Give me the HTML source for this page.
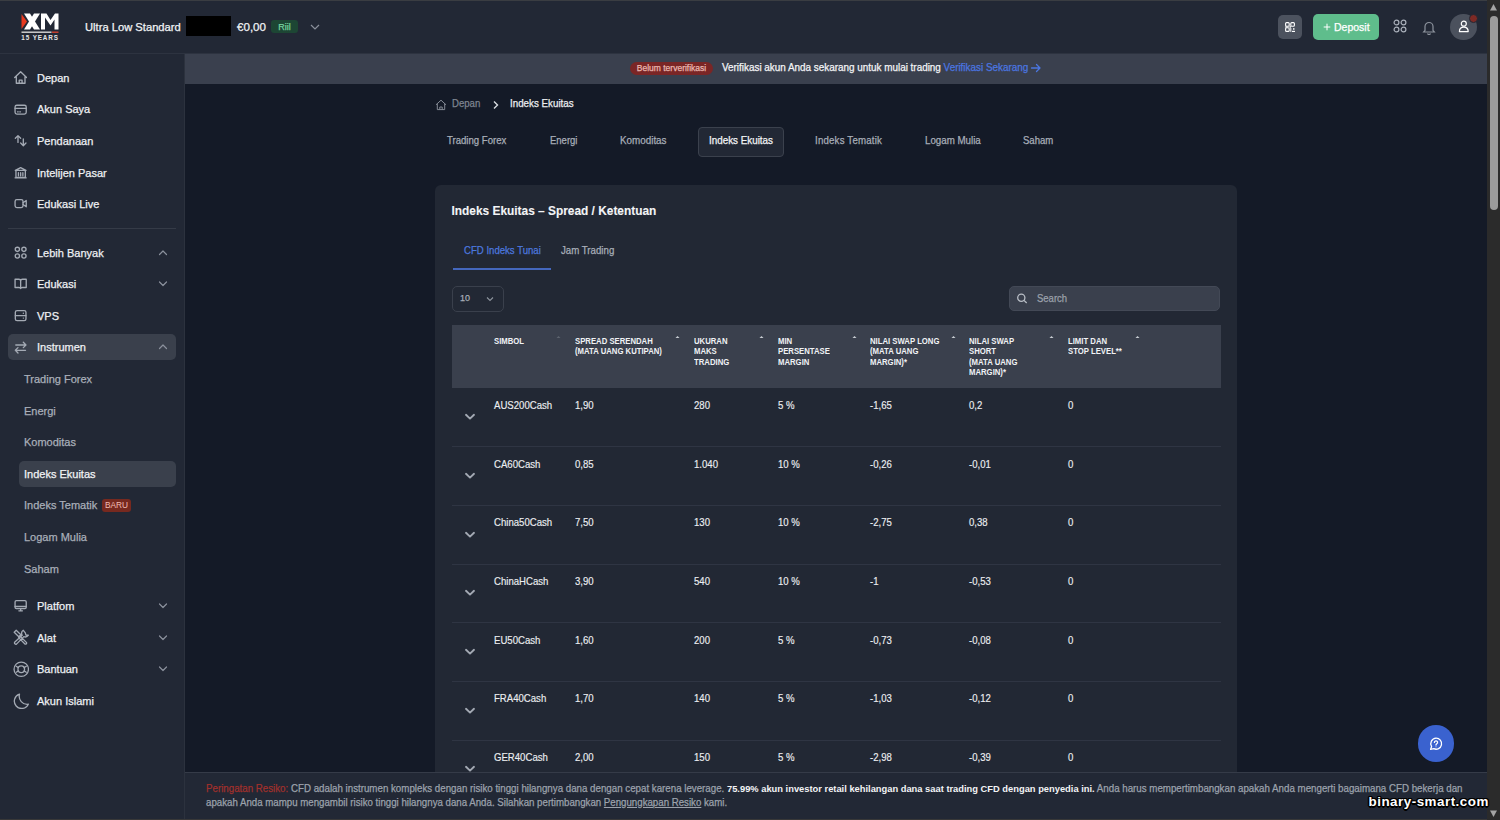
<!DOCTYPE html>
<html><head><meta charset="utf-8">
<style>
*{box-sizing:border-box;margin:0;padding:0}
html,body{width:1500px;height:820px;overflow:hidden}
body{background:#141a27;font-family:"Liberation Sans",sans-serif;color:#e6e8ec;position:relative}
div,span,b,u{-webkit-text-stroke:0.25px currentColor}
.abs{position:absolute}
#topline{left:0;top:0;width:1500px;height:1px;background:#3a3d42}
#header{left:0;top:1px;width:1487px;height:52px;background:#222835}
#hdrline{left:0;top:53px;width:1487px;height:1px;background:#2d3340}
#sidebar{left:0;top:54px;width:184px;height:766px;background:#222835}
#sbline{left:184px;top:54px;width:1px;height:766px;background:#2c323e}
#banner{left:185px;top:54px;width:1302px;height:30px;background:#3a404e}
#footer{left:185px;top:772px;width:1302px;height:48px;background:#222835;border-top:1px solid #353b48}
#scroll{left:1487px;top:0;width:13px;height:820px;background:#2b2b2b}
#thumb{left:1490px;top:16px;width:8px;height:194px;border-radius:4px;background:#9b9b9b}
.nav{position:absolute;left:37px;font-size:11px;color:#eef0f3;white-space:nowrap}
.sub{position:absolute;left:24px;font-size:11px;color:#a9afb9;white-space:nowrap}
.ico{position:absolute;left:14px;width:14px;height:14px}
.chev{position:absolute;left:158px;width:10px;height:10px}
</style></head><body>
<div id="topline" class="abs"></div>
<div id="header" class="abs"></div>
<div id="hdrline" class="abs"></div>
<div id="sidebar" class="abs"></div>
<div id="sbline" class="abs"></div>
<div id="banner" class="abs"></div>
<!-- banner content -->
<div class="abs" style="left:630px;top:62px;width:83px;height:12.5px;border-radius:7px;background:#7a2626;color:#eab8b1;font-size:8.5px;line-height:12.5px;text-align:center;white-space:nowrap">Belum terverifikasi</div>
<div class="abs" style="left:721.5px;top:61px;font-size:10.49px;line-height:14px;color:#f3f4f6;white-space:nowrap;transform:scaleX(0.9434);transform-origin:0 0">Verifikasi akun Anda sekarang untuk mulai trading <span style="color:#4b76e0">Verifikasi Sekarang</span></div>
<svg class="abs" style="left:1030px;top:63px" width="12" height="10" viewBox="0 0 12 10" fill="none" stroke="#4b76e0" stroke-width="1.3" stroke-linecap="round" stroke-linejoin="round"><path d="M1.5 5 H10 M6.5 1.5 L10 5 L6.5 8.5"/></svg>
<!-- breadcrumb -->
<svg class="abs" style="left:435px;top:99px" width="12" height="12" viewBox="0 0 12 12" fill="none" stroke="#858b96" stroke-width="1" stroke-linejoin="round"><path d="M1 5.8 L6 1.2 L11 5.8 M2.3 4.8 V10.6 H9.7 V4.8 M4.8 10.6 V8 H7.2 V10.6"/></svg>
<div class="abs" style="left:452px;top:97px;font-size:10.18px;line-height:14px;color:#7e8490;white-space:nowrap;transform:scaleX(0.9434);transform-origin:0 0">Depan</div>
<svg class="abs" style="left:492px;top:100px" width="8" height="10" viewBox="0 0 8 10"><path d="M2 1.5 L5.5 5 L2 8.5" fill="none" stroke="#d9dce1" stroke-width="1.4"/></svg>
<div class="abs" style="left:510px;top:97px;font-size:10.39px;line-height:14px;color:#eceef1;white-space:nowrap;transform:scaleX(0.9434);transform-origin:0 0">Indeks Ekuitas</div>
<!-- tabs -->
<div class="abs" style="left:698px;top:127px;width:86px;height:30px;border-radius:4px;background:#222835;border:1px solid #3b414d"></div>
<div class="abs" style="left:447.2px;top:133.7px;font-size:10.18px;line-height:14px;color:#a8aeb8;white-space:nowrap;transform:scaleX(0.9434);transform-origin:0 0">Trading Forex</div>
<div class="abs" style="left:549.6px;top:133.7px;font-size:10.07px;line-height:14px;color:#a8aeb8;white-space:nowrap;transform:scaleX(0.9434);transform-origin:0 0">Energi</div>
<div class="abs" style="left:619.5px;top:133.7px;font-size:10.45px;line-height:14px;color:#a8aeb8;white-space:nowrap;transform:scaleX(0.9434);transform-origin:0 0">Komoditas</div>
<div class="abs" style="left:708.8px;top:133.7px;font-size:10.43px;line-height:14px;color:#f3f4f6;white-space:nowrap;transform:scaleX(0.9434);transform-origin:0 0">Indeks Ekuitas</div>
<div class="abs" style="left:815.3px;top:133.7px;font-size:10.28px;letter-spacing:0.2px;line-height:14px;color:#a8aeb8;white-space:nowrap;transform:scaleX(0.9434);transform-origin:0 0">Indeks Tematik</div>
<div class="abs" style="left:924.5px;top:133.7px;font-size:10.34px;line-height:14px;color:#a8aeb8;white-space:nowrap;transform:scaleX(0.9434);transform-origin:0 0">Logam Mulia</div>
<div class="abs" style="left:1022.5px;top:133.7px;font-size:10.13px;line-height:14px;color:#a8aeb8;white-space:nowrap;transform:scaleX(0.9434);transform-origin:0 0">Saham</div>
<!-- card -->
<div class="abs" style="left:435px;top:185px;width:802px;height:600px;border-radius:6px;background:#222834"></div>
<div class="abs" style="left:451.5px;top:203px;font-size:11.9px;font-weight:bold;line-height:16px;color:#f3f4f6;white-space:nowrap;-webkit-text-stroke:0.1px">Indeks Ekuitas &#8211; Spread / Ketentuan</div>
<div class="abs" style="left:463.5px;top:244px;font-size:10.18px;line-height:14px;color:#4c77de;white-space:nowrap;transform:scaleX(0.9434);transform-origin:0 0">CFD Indeks Tunai</div>
<div class="abs" style="left:561.4px;top:244px;font-size:10.28px;line-height:14px;color:#a8aeb8;white-space:nowrap;transform:scaleX(0.9434);transform-origin:0 0">Jam Trading</div>
<div class="abs" style="left:452.5px;top:267.5px;width:98px;height:2px;background:#4467bd"></div>
<div class="abs" style="left:451.5px;top:286px;width:52px;height:25.5px;border-radius:5px;border:1px solid #3a404c"></div>
<div class="abs" style="left:459.5px;top:291.3px;font-size:9.9px;line-height:14px;color:#a8aeb8;transform:scaleX(0.91);transform-origin:0 0">10</div>
<svg class="abs" style="left:486px;top:296px" width="8" height="6" viewBox="0 0 8 6"><path d="M1 1.5 L4 4.5 L7 1.5" fill="none" stroke="#8e949e" stroke-width="1.1"/></svg>
<div class="abs" style="left:1009.3px;top:286.3px;width:211px;height:25px;border-radius:5px;background:#3a404d;border:1px solid #434956"></div>
<svg class="abs" style="left:1016px;top:292px" width="12" height="12" viewBox="0 0 12 12" fill="none" stroke="#b9bec6" stroke-width="1.3"><circle cx="5.3" cy="5.7" r="3.6"/><path d="M8 8.4 L10.7 11"/></svg>
<div class="abs" style="left:1036.5px;top:291.5px;font-size:10.07px;line-height:14px;color:#9aa0aa;white-space:nowrap;transform:scaleX(0.9434);transform-origin:0 0">Search</div>
<!-- table header -->
<div class="abs" style="left:451.5px;top:325px;width:769px;height:63px;background:#3a404d"></div>
<div class="abs" style="left:493.5px;top:335.9px;font-size:9.4px;font-weight:bold;line-height:10.4px;color:#f0f2f5;white-space:nowrap;transform:scaleX(0.825);transform-origin:0 0;-webkit-text-stroke:0">SIMBOL</div>
<svg class="abs" style="left:556.2px;top:334.8px" width="5" height="4" viewBox="0 0 5 4"><path d="M0.5 3 L2.5 1 L4.5 3 Z" fill="#5d636e"/></svg>
<div class="abs" style="left:574.8px;top:335.9px;font-size:9.4px;font-weight:bold;line-height:10.4px;color:#f0f2f5;white-space:nowrap;transform:scaleX(0.825);transform-origin:0 0;-webkit-text-stroke:0">SPREAD SERENDAH<br>(MATA UANG KUTIPAN)</div>
<svg class="abs" style="left:674.7px;top:334.8px" width="5" height="4" viewBox="0 0 5 4"><path d="M0.5 3 L2.5 1 L4.5 3 Z" fill="#c9cdd3"/></svg>
<div class="abs" style="left:693.5px;top:335.9px;font-size:9.4px;font-weight:bold;line-height:10.4px;color:#f0f2f5;white-space:nowrap;transform:scaleX(0.825);transform-origin:0 0;-webkit-text-stroke:0">UKURAN<br>MAKS<br>TRADING</div>
<svg class="abs" style="left:759.4px;top:334.8px" width="5" height="4" viewBox="0 0 5 4"><path d="M0.5 3 L2.5 1 L4.5 3 Z" fill="#c9cdd3"/></svg>
<div class="abs" style="left:777.7px;top:335.9px;font-size:9.4px;font-weight:bold;line-height:10.4px;color:#f0f2f5;white-space:nowrap;transform:scaleX(0.825);transform-origin:0 0;-webkit-text-stroke:0">MIN<br>PERSENTASE<br>MARGIN</div>
<svg class="abs" style="left:851.5px;top:334.8px" width="5" height="4" viewBox="0 0 5 4"><path d="M0.5 3 L2.5 1 L4.5 3 Z" fill="#c9cdd3"/></svg>
<div class="abs" style="left:870.2px;top:335.9px;font-size:9.4px;font-weight:bold;line-height:10.4px;color:#f0f2f5;white-space:nowrap;transform:scaleX(0.825);transform-origin:0 0;-webkit-text-stroke:0">NILAI SWAP LONG<br>(MATA UANG<br>MARGIN)*</div>
<svg class="abs" style="left:950.5px;top:334.8px" width="5" height="4" viewBox="0 0 5 4"><path d="M0.5 3 L2.5 1 L4.5 3 Z" fill="#c9cdd3"/></svg>
<div class="abs" style="left:968.8px;top:335.9px;font-size:9.4px;font-weight:bold;line-height:10.4px;color:#f0f2f5;white-space:nowrap;transform:scaleX(0.825);transform-origin:0 0;-webkit-text-stroke:0">NILAI SWAP<br>SHORT<br>(MATA UANG<br>MARGIN)*</div>
<svg class="abs" style="left:1049.4px;top:334.8px" width="5" height="4" viewBox="0 0 5 4"><path d="M0.5 3 L2.5 1 L4.5 3 Z" fill="#c9cdd3"/></svg>
<div class="abs" style="left:1067.7px;top:335.9px;font-size:9.4px;font-weight:bold;line-height:10.4px;color:#f0f2f5;white-space:nowrap;transform:scaleX(0.825);transform-origin:0 0;-webkit-text-stroke:0">LIMIT DAN<br>STOP LEVEL**</div>
<svg class="abs" style="left:1134.9px;top:334.8px" width="5" height="4" viewBox="0 0 5 4"><path d="M0.5 3 L2.5 1 L4.5 3 Z" fill="#c9cdd3"/></svg>
<div class="abs" style="left:493.5px;top:399.0px;font-size:10.4px;line-height:14px;color:#eceef1;white-space:nowrap;transform:scaleX(0.923);transform-origin:0 0;-webkit-text-stroke:0.15px currentColor">AUS200Cash</div>
<div class="abs" style="left:574.8px;top:399.0px;font-size:10.4px;line-height:14px;color:#eceef1;white-space:nowrap;transform:scaleX(0.923);transform-origin:0 0;-webkit-text-stroke:0.15px currentColor">1,90</div>
<div class="abs" style="left:693.5px;top:399.0px;font-size:10.4px;line-height:14px;color:#eceef1;white-space:nowrap;transform:scaleX(0.923);transform-origin:0 0;-webkit-text-stroke:0.15px currentColor">280</div>
<div class="abs" style="left:777.7px;top:399.0px;font-size:10.4px;line-height:14px;color:#eceef1;white-space:nowrap;transform:scaleX(0.923);transform-origin:0 0;-webkit-text-stroke:0.15px currentColor">5 %</div>
<div class="abs" style="left:870.4px;top:399.0px;font-size:10.4px;line-height:14px;color:#eceef1;white-space:nowrap;transform:scaleX(0.923);transform-origin:0 0;-webkit-text-stroke:0.15px currentColor">-1,65</div>
<div class="abs" style="left:968.8px;top:399.0px;font-size:10.4px;line-height:14px;color:#eceef1;white-space:nowrap;transform:scaleX(0.923);transform-origin:0 0;-webkit-text-stroke:0.15px currentColor">0,2</div>
<div class="abs" style="left:1067.7px;top:399.0px;font-size:10.4px;line-height:14px;color:#eceef1;white-space:nowrap;transform:scaleX(0.923);transform-origin:0 0;-webkit-text-stroke:0.15px currentColor">0</div>
<svg class="abs" style="left:464px;top:413.2px" width="12" height="8" viewBox="0 0 12 8"><path d="M2 1.8 L6 5.6 L10 1.8" fill="none" stroke="#a3a9b3" stroke-width="1.9" stroke-linecap="round" stroke-linejoin="round"/></svg>
<div class="abs" style="left:451.5px;top:446.2px;width:769px;height:1px;background:#2f3543"></div>
<div class="abs" style="left:493.5px;top:457.6px;font-size:10.4px;line-height:14px;color:#eceef1;white-space:nowrap;transform:scaleX(0.923);transform-origin:0 0;-webkit-text-stroke:0.15px currentColor">CA60Cash</div>
<div class="abs" style="left:574.8px;top:457.6px;font-size:10.4px;line-height:14px;color:#eceef1;white-space:nowrap;transform:scaleX(0.923);transform-origin:0 0;-webkit-text-stroke:0.15px currentColor">0,85</div>
<div class="abs" style="left:693.5px;top:457.6px;font-size:10.4px;line-height:14px;color:#eceef1;white-space:nowrap;transform:scaleX(0.923);transform-origin:0 0;-webkit-text-stroke:0.15px currentColor">1.040</div>
<div class="abs" style="left:777.7px;top:457.6px;font-size:10.4px;line-height:14px;color:#eceef1;white-space:nowrap;transform:scaleX(0.923);transform-origin:0 0;-webkit-text-stroke:0.15px currentColor">10 %</div>
<div class="abs" style="left:870.4px;top:457.6px;font-size:10.4px;line-height:14px;color:#eceef1;white-space:nowrap;transform:scaleX(0.923);transform-origin:0 0;-webkit-text-stroke:0.15px currentColor">-0,26</div>
<div class="abs" style="left:968.8px;top:457.6px;font-size:10.4px;line-height:14px;color:#eceef1;white-space:nowrap;transform:scaleX(0.923);transform-origin:0 0;-webkit-text-stroke:0.15px currentColor">-0,01</div>
<div class="abs" style="left:1067.7px;top:457.6px;font-size:10.4px;line-height:14px;color:#eceef1;white-space:nowrap;transform:scaleX(0.923);transform-origin:0 0;-webkit-text-stroke:0.15px currentColor">0</div>
<svg class="abs" style="left:464px;top:471.8px" width="12" height="8" viewBox="0 0 12 8"><path d="M2 1.8 L6 5.6 L10 1.8" fill="none" stroke="#a3a9b3" stroke-width="1.9" stroke-linecap="round" stroke-linejoin="round"/></svg>
<div class="abs" style="left:451.5px;top:504.8px;width:769px;height:1px;background:#2f3543"></div>
<div class="abs" style="left:493.5px;top:516.3px;font-size:10.4px;line-height:14px;color:#eceef1;white-space:nowrap;transform:scaleX(0.923);transform-origin:0 0;-webkit-text-stroke:0.15px currentColor">China50Cash</div>
<div class="abs" style="left:574.8px;top:516.3px;font-size:10.4px;line-height:14px;color:#eceef1;white-space:nowrap;transform:scaleX(0.923);transform-origin:0 0;-webkit-text-stroke:0.15px currentColor">7,50</div>
<div class="abs" style="left:693.5px;top:516.3px;font-size:10.4px;line-height:14px;color:#eceef1;white-space:nowrap;transform:scaleX(0.923);transform-origin:0 0;-webkit-text-stroke:0.15px currentColor">130</div>
<div class="abs" style="left:777.7px;top:516.3px;font-size:10.4px;line-height:14px;color:#eceef1;white-space:nowrap;transform:scaleX(0.923);transform-origin:0 0;-webkit-text-stroke:0.15px currentColor">10 %</div>
<div class="abs" style="left:870.4px;top:516.3px;font-size:10.4px;line-height:14px;color:#eceef1;white-space:nowrap;transform:scaleX(0.923);transform-origin:0 0;-webkit-text-stroke:0.15px currentColor">-2,75</div>
<div class="abs" style="left:968.8px;top:516.3px;font-size:10.4px;line-height:14px;color:#eceef1;white-space:nowrap;transform:scaleX(0.923);transform-origin:0 0;-webkit-text-stroke:0.15px currentColor">0,38</div>
<div class="abs" style="left:1067.7px;top:516.3px;font-size:10.4px;line-height:14px;color:#eceef1;white-space:nowrap;transform:scaleX(0.923);transform-origin:0 0;-webkit-text-stroke:0.15px currentColor">0</div>
<svg class="abs" style="left:464px;top:530.5px" width="12" height="8" viewBox="0 0 12 8"><path d="M2 1.8 L6 5.6 L10 1.8" fill="none" stroke="#a3a9b3" stroke-width="1.9" stroke-linecap="round" stroke-linejoin="round"/></svg>
<div class="abs" style="left:451.5px;top:563.5px;width:769px;height:1px;background:#2f3543"></div>
<div class="abs" style="left:493.5px;top:574.9px;font-size:10.4px;line-height:14px;color:#eceef1;white-space:nowrap;transform:scaleX(0.923);transform-origin:0 0;-webkit-text-stroke:0.15px currentColor">ChinaHCash</div>
<div class="abs" style="left:574.8px;top:574.9px;font-size:10.4px;line-height:14px;color:#eceef1;white-space:nowrap;transform:scaleX(0.923);transform-origin:0 0;-webkit-text-stroke:0.15px currentColor">3,90</div>
<div class="abs" style="left:693.5px;top:574.9px;font-size:10.4px;line-height:14px;color:#eceef1;white-space:nowrap;transform:scaleX(0.923);transform-origin:0 0;-webkit-text-stroke:0.15px currentColor">540</div>
<div class="abs" style="left:777.7px;top:574.9px;font-size:10.4px;line-height:14px;color:#eceef1;white-space:nowrap;transform:scaleX(0.923);transform-origin:0 0;-webkit-text-stroke:0.15px currentColor">10 %</div>
<div class="abs" style="left:870.4px;top:574.9px;font-size:10.4px;line-height:14px;color:#eceef1;white-space:nowrap;transform:scaleX(0.923);transform-origin:0 0;-webkit-text-stroke:0.15px currentColor">-1</div>
<div class="abs" style="left:968.8px;top:574.9px;font-size:10.4px;line-height:14px;color:#eceef1;white-space:nowrap;transform:scaleX(0.923);transform-origin:0 0;-webkit-text-stroke:0.15px currentColor">-0,53</div>
<div class="abs" style="left:1067.7px;top:574.9px;font-size:10.4px;line-height:14px;color:#eceef1;white-space:nowrap;transform:scaleX(0.923);transform-origin:0 0;-webkit-text-stroke:0.15px currentColor">0</div>
<svg class="abs" style="left:464px;top:589.1px" width="12" height="8" viewBox="0 0 12 8"><path d="M2 1.8 L6 5.6 L10 1.8" fill="none" stroke="#a3a9b3" stroke-width="1.9" stroke-linecap="round" stroke-linejoin="round"/></svg>
<div class="abs" style="left:451.5px;top:622.1px;width:769px;height:1px;background:#2f3543"></div>
<div class="abs" style="left:493.5px;top:633.6px;font-size:10.4px;line-height:14px;color:#eceef1;white-space:nowrap;transform:scaleX(0.923);transform-origin:0 0;-webkit-text-stroke:0.15px currentColor">EU50Cash</div>
<div class="abs" style="left:574.8px;top:633.6px;font-size:10.4px;line-height:14px;color:#eceef1;white-space:nowrap;transform:scaleX(0.923);transform-origin:0 0;-webkit-text-stroke:0.15px currentColor">1,60</div>
<div class="abs" style="left:693.5px;top:633.6px;font-size:10.4px;line-height:14px;color:#eceef1;white-space:nowrap;transform:scaleX(0.923);transform-origin:0 0;-webkit-text-stroke:0.15px currentColor">200</div>
<div class="abs" style="left:777.7px;top:633.6px;font-size:10.4px;line-height:14px;color:#eceef1;white-space:nowrap;transform:scaleX(0.923);transform-origin:0 0;-webkit-text-stroke:0.15px currentColor">5 %</div>
<div class="abs" style="left:870.4px;top:633.6px;font-size:10.4px;line-height:14px;color:#eceef1;white-space:nowrap;transform:scaleX(0.923);transform-origin:0 0;-webkit-text-stroke:0.15px currentColor">-0,73</div>
<div class="abs" style="left:968.8px;top:633.6px;font-size:10.4px;line-height:14px;color:#eceef1;white-space:nowrap;transform:scaleX(0.923);transform-origin:0 0;-webkit-text-stroke:0.15px currentColor">-0,08</div>
<div class="abs" style="left:1067.7px;top:633.6px;font-size:10.4px;line-height:14px;color:#eceef1;white-space:nowrap;transform:scaleX(0.923);transform-origin:0 0;-webkit-text-stroke:0.15px currentColor">0</div>
<svg class="abs" style="left:464px;top:647.8px" width="12" height="8" viewBox="0 0 12 8"><path d="M2 1.8 L6 5.6 L10 1.8" fill="none" stroke="#a3a9b3" stroke-width="1.9" stroke-linecap="round" stroke-linejoin="round"/></svg>
<div class="abs" style="left:451.5px;top:680.8px;width:769px;height:1px;background:#2f3543"></div>
<div class="abs" style="left:493.5px;top:692.3px;font-size:10.4px;line-height:14px;color:#eceef1;white-space:nowrap;transform:scaleX(0.923);transform-origin:0 0;-webkit-text-stroke:0.15px currentColor">FRA40Cash</div>
<div class="abs" style="left:574.8px;top:692.3px;font-size:10.4px;line-height:14px;color:#eceef1;white-space:nowrap;transform:scaleX(0.923);transform-origin:0 0;-webkit-text-stroke:0.15px currentColor">1,70</div>
<div class="abs" style="left:693.5px;top:692.3px;font-size:10.4px;line-height:14px;color:#eceef1;white-space:nowrap;transform:scaleX(0.923);transform-origin:0 0;-webkit-text-stroke:0.15px currentColor">140</div>
<div class="abs" style="left:777.7px;top:692.3px;font-size:10.4px;line-height:14px;color:#eceef1;white-space:nowrap;transform:scaleX(0.923);transform-origin:0 0;-webkit-text-stroke:0.15px currentColor">5 %</div>
<div class="abs" style="left:870.4px;top:692.3px;font-size:10.4px;line-height:14px;color:#eceef1;white-space:nowrap;transform:scaleX(0.923);transform-origin:0 0;-webkit-text-stroke:0.15px currentColor">-1,03</div>
<div class="abs" style="left:968.8px;top:692.3px;font-size:10.4px;line-height:14px;color:#eceef1;white-space:nowrap;transform:scaleX(0.923);transform-origin:0 0;-webkit-text-stroke:0.15px currentColor">-0,12</div>
<div class="abs" style="left:1067.7px;top:692.3px;font-size:10.4px;line-height:14px;color:#eceef1;white-space:nowrap;transform:scaleX(0.923);transform-origin:0 0;-webkit-text-stroke:0.15px currentColor">0</div>
<svg class="abs" style="left:464px;top:706.5px" width="12" height="8" viewBox="0 0 12 8"><path d="M2 1.8 L6 5.6 L10 1.8" fill="none" stroke="#a3a9b3" stroke-width="1.9" stroke-linecap="round" stroke-linejoin="round"/></svg>
<div class="abs" style="left:451.5px;top:739.5px;width:769px;height:1px;background:#2f3543"></div>
<div class="abs" style="left:493.5px;top:750.9px;font-size:10.4px;line-height:14px;color:#eceef1;white-space:nowrap;transform:scaleX(0.923);transform-origin:0 0;-webkit-text-stroke:0.15px currentColor">GER40Cash</div>
<div class="abs" style="left:574.8px;top:750.9px;font-size:10.4px;line-height:14px;color:#eceef1;white-space:nowrap;transform:scaleX(0.923);transform-origin:0 0;-webkit-text-stroke:0.15px currentColor">2,00</div>
<div class="abs" style="left:693.5px;top:750.9px;font-size:10.4px;line-height:14px;color:#eceef1;white-space:nowrap;transform:scaleX(0.923);transform-origin:0 0;-webkit-text-stroke:0.15px currentColor">150</div>
<div class="abs" style="left:777.7px;top:750.9px;font-size:10.4px;line-height:14px;color:#eceef1;white-space:nowrap;transform:scaleX(0.923);transform-origin:0 0;-webkit-text-stroke:0.15px currentColor">5 %</div>
<div class="abs" style="left:870.4px;top:750.9px;font-size:10.4px;line-height:14px;color:#eceef1;white-space:nowrap;transform:scaleX(0.923);transform-origin:0 0;-webkit-text-stroke:0.15px currentColor">-2,98</div>
<div class="abs" style="left:968.8px;top:750.9px;font-size:10.4px;line-height:14px;color:#eceef1;white-space:nowrap;transform:scaleX(0.923);transform-origin:0 0;-webkit-text-stroke:0.15px currentColor">-0,39</div>
<div class="abs" style="left:1067.7px;top:750.9px;font-size:10.4px;line-height:14px;color:#eceef1;white-space:nowrap;transform:scaleX(0.923);transform-origin:0 0;-webkit-text-stroke:0.15px currentColor">0</div>
<svg class="abs" style="left:464px;top:765.1px" width="12" height="8" viewBox="0 0 12 8"><path d="M2 1.8 L6 5.6 L10 1.8" fill="none" stroke="#a3a9b3" stroke-width="1.9" stroke-linecap="round" stroke-linejoin="round"/></svg>
<div id="footer" class="abs"></div>
<div class="abs" style="left:206px;top:782.1px;width:1350px;font-size:10.28px;line-height:14px;color:#9ca2ac;white-space:nowrap;transform:scaleX(0.948);transform-origin:0 0"><span style="color:#a0302c">Peringatan Resiko:</span> CFD adalah instrumen kompleks dengan risiko tinggi hilangnya dana dengan cepat karena leverage. <b style="color:#f3f4f6;-webkit-text-stroke:0;font-size:9.86px">75.99% akun investor retail kehilangan dana saat trading CFD dengan penyedia ini.</b> Anda harus mempertimbangkan apakah Anda mengerti bagaimana CFD bekerja dan</div>
<div class="abs" style="left:206px;top:795.7px;width:1350px;font-size:10.28px;line-height:14px;color:#9ca2ac;white-space:nowrap;transform:scaleX(0.9434);transform-origin:0 0">apakah Anda mampu mengambil risiko tinggi hilangnya dana Anda. Silahkan pertimbangkan <u>Pengungkapan Resiko</u> kami.</div>
<div class="abs" style="left:1417.5px;top:725.2px;width:36.8px;height:36.8px;border-radius:50%;background:#3a62cf"></div>
<svg class="abs" style="left:1427px;top:735px" width="18" height="18" viewBox="0 0 18 18" fill="none" stroke="#fff" stroke-width="1.3" stroke-linejoin="round"><path d="M9 3.2 A5.5 5.5 0 1 1 6.8 13.7 L3.6 14.3 L4.6 11.6 A5.5 5.5 0 0 1 9 3.2 Z"/><path d="M7.4 7.4 A1.6 1.6 0 1 1 9.6 8.9 C9.1 9.2 9 9.5 9 10" stroke-linecap="round"/><circle cx="9" cy="11.8" r="0.5" fill="#fff" stroke="none"/></svg>
<div id="scroll" class="abs"></div>
<div id="thumb" class="abs"></div>

<!-- logo -->
<svg class="abs" style="left:20.8px;top:13px" width="40" height="28" viewBox="0 0 40 28">
 <polygon points="0.5,1 6,8.5 0.5,16" fill="#e8391f"/>
 <polygon points="3,0.5 9,0.5 19,16.5 13,16.5" fill="#fff"/>
 <polygon points="13,0.5 19,0.5 9,16.5 3,16.5" fill="#fff"/>
 <polygon points="20,16.5 20,0.5 25.5,0.5 29.5,7 34,0.5 37.5,0.5 37.5,16.5 33.5,16.5 33.5,6.5 29.5,12.5 24,4.5 24,16.5" fill="#fff"/>
 <rect x="0.5" y="18.5" width="30" height="1.4" fill="#d8d8d8"/>
 <rect x="31" y="18.5" width="6.5" height="1.4" fill="#d2412e"/>
 <text x="0.3" y="26.8" font-family="Liberation Sans" font-weight="bold" font-size="6.3" fill="#e6e6e6" letter-spacing="0.9">15 YEARS</text>
</svg>
<div class="abs" style="left:85px;top:20px;font-size:11.2px;line-height:14px;color:#f1f3f5;white-space:nowrap">Ultra Low Standard</div>
<div class="abs" style="left:186px;top:16px;width:45px;height:20px;background:#000"></div>
<div class="abs" style="left:237px;top:20px;font-size:11.6px;line-height:14px;color:#f1f3f5;white-space:nowrap">€0,00</div>
<div class="abs" style="left:271px;top:20px;width:27px;height:13px;border-radius:3px;background:#1d4634;color:#75d39f;font-size:9px;line-height:14px;text-align:center">Riil</div>
<svg class="abs" style="left:309px;top:22px" width="12" height="10" viewBox="0 0 12 10"><path d="M2 3 L6 7 L10 3" fill="none" stroke="#8a909b" stroke-width="1.2"/></svg>
<!-- right -->
<div class="abs" style="left:1278px;top:14.7px;width:24.3px;height:24.3px;border-radius:5px;background:#4c525e"></div>
<svg class="abs" style="left:1285px;top:21.5px" width="10" height="10" viewBox="0 0 10 10" fill="#fff">
 <rect x="0.6" y="0.6" width="3.6" height="3.6" rx="1" fill="none" stroke="#fff" stroke-width="1.1"/>
 <rect x="5.8" y="0.6" width="3.6" height="3.6" rx="1" fill="none" stroke="#fff" stroke-width="1.1"/>
 <rect x="0.6" y="5.8" width="3.6" height="3.6" rx="1" fill="none" stroke="#fff" stroke-width="1.1"/>
 <rect x="0" y="4.6" width="2.5" height="0.9"/><rect x="4.5" y="4.2" width="1.5" height="1.5"/><rect x="5.3" y="6" width="1" height="3.8"/><rect x="7" y="8.8" width="3" height="1.2"/><rect x="8" y="6.2" width="1.5" height="1.5"/>
</svg>
<div class="abs" style="left:1313px;top:14px;width:66px;height:26px;border-radius:5px;background:#5fbd8c"></div>
<svg class="abs" style="left:1322px;top:22px" width="10" height="10" viewBox="0 0 10 10"><path d="M5 1.7V8.3M1.7 5H8.3" stroke="#fff" stroke-width="1"/></svg>
<div class="abs" style="left:1334px;top:20px;font-size:10.5px;line-height:14px;color:#fff;white-space:nowrap">Deposit</div>
<svg class="abs" style="left:1393px;top:19px" width="14" height="14" viewBox="0 0 14 14" fill="none" stroke="#aab0ba" stroke-width="1.2">
 <circle cx="3.5" cy="3.5" r="2.4"/><circle cx="10.5" cy="3.5" r="2.4"/><circle cx="3.5" cy="10.5" r="2.4"/><circle cx="10.5" cy="10.5" r="2.4"/>
</svg>
<svg class="abs" style="left:1422px;top:20px" width="14" height="15" viewBox="0 0 14 15" fill="none" stroke="#8d939d" stroke-width="1.2">
 <path d="M3 10.5 V6.5 A4 4 0 0 1 11 6.5 V10.5 L12.3 12 H1.7 Z"/><path d="M5.5 13.5 A1.6 1.6 0 0 0 8.5 13.5"/>
</svg>
<div class="abs" style="left:1450px;top:13.8px;width:26.6px;height:26.6px;border-radius:50%;background:#4b515d"></div>
<svg class="abs" style="left:1457px;top:19px" width="14" height="15" viewBox="0 0 14 15" fill="none" stroke="#fff" stroke-width="1.2">
 <circle cx="6.8" cy="4.7" r="2.5"/><path d="M2.4 12.6 C2.4 9.6 4.3 8.2 6.8 8.2 C9.3 8.2 11.2 9.6 11.2 12.6 Z" stroke-linejoin="round"/>
</svg>
<div class="abs" style="left:1469px;top:13.9px;width:8.8px;height:8.8px;border-radius:50%;background:#7e2a25;border:1px solid #222835"></div>
<!-- sidebar -->
<svg class="abs" style="left:13.9px;top:71.0px" width="13.3" height="13.3" viewBox="0 0 15 15" stroke="#a4aab4" stroke-width="1.5" fill="none" stroke-linecap="round" stroke-linejoin="round"><path d="M0.8 7.3 L7.5 0.9 L14.2 7.3 M2.6 5.7 V13.8 H12.4 V5.7 M5.9 13.8 V10.2 H9.1 V13.8"/></svg>
<div class="nav" style="top:70.8px;line-height:14px">Depan</div>
<svg class="abs" style="left:13.9px;top:102.6px" width="13.3" height="13.3" viewBox="0 0 15 15" stroke="#a4aab4" stroke-width="1.5" fill="none" stroke-linecap="round" stroke-linejoin="round"><rect x="1.2" y="2.5" width="12.6" height="10" rx="2"/><path d="M1.2 6 H13.8 M4 10 H4.8 M6.5 10 H7.3"/></svg>
<div class="nav" style="top:102.4px;line-height:14px">Akun Saya</div>
<svg class="abs" style="left:13.9px;top:134.2px" width="13.3" height="13.3" viewBox="0 0 15 15" stroke="#a4aab4" stroke-width="1.5" fill="none" stroke-linecap="round" stroke-linejoin="round"><path d="M4.5 9.5 V1.8 M1.5 4.8 L4.5 1.8 L7.5 4.8 M10.5 5.5 V13.2 M7.5 10.2 L10.5 13.2 L13.5 10.2"/></svg>
<div class="nav" style="top:134.0px;line-height:14px">Pendanaan</div>
<svg class="abs" style="left:13.9px;top:165.8px" width="13.3" height="13.3" viewBox="0 0 15 15" stroke="#a4aab4" stroke-width="1.5" fill="none" stroke-linecap="round" stroke-linejoin="round"><path d="M1.5 5 L7.5 1.8 L13.5 5 Z M2.2 5.5 V12.8 H12.8 V5.5 M1.2 13.3 H13.8 M5 7.5 V11 M7.5 7.5 V11 M10 7.5 V11"/></svg>
<div class="nav" style="top:165.6px;line-height:14px">Intelijen Pasar</div>
<svg class="abs" style="left:13.9px;top:197.4px" width="13.3" height="13.3" viewBox="0 0 15 15" stroke="#a4aab4" stroke-width="1.5" fill="none" stroke-linecap="round" stroke-linejoin="round"><rect x="1.2" y="3" width="9" height="9" rx="2"/><path d="M10.2 6.5 L13.8 4 V11 L10.2 8.5"/></svg>
<div class="nav" style="top:197.2px;line-height:14px">Edukasi Live</div>
<div class="abs" style="left:8px;top:228px;width:168px;height:1px;background:#353b47"></div>
<div class="abs" style="left:8px;top:334px;width:168px;height:26px;border-radius:5px;background:#3a404c"></div>
<div class="abs" style="left:19px;top:461px;width:157px;height:26px;border-radius:5px;background:#3a404c"></div>
<svg class="abs" style="left:13.9px;top:245.7px" width="13.3" height="13.3" viewBox="0 0 15 15" stroke="#a4aab4" stroke-width="1.5" fill="none" stroke-linecap="round" stroke-linejoin="round"><circle cx="3.8" cy="3.8" r="2.4"/><circle cx="11.2" cy="3.8" r="2.4"/><circle cx="3.8" cy="11.2" r="2.4"/><circle cx="11.2" cy="11.2" r="2.4"/></svg>
<div class="nav" style="top:245.5px;line-height:14px">Lebih Banyak</div>
<svg class="abs" style="left:158px;top:248.5px" width="10" height="8" viewBox="0 0 10 8"><path d="M1.5 5.5 L5 2 L8.5 5.5" fill="none" stroke="#8b919c" stroke-width="1.2" stroke-linecap="round" stroke-linejoin="round"/></svg>
<svg class="abs" style="left:13.9px;top:277.3px" width="13.3" height="13.3" viewBox="0 0 15 15" stroke="#a4aab4" stroke-width="1.5" fill="none" stroke-linecap="round" stroke-linejoin="round"><path d="M1.2 2.5 H5.5 Q7.5 2.5 7.5 4.5 V13 Q7.5 11.8 5.5 11.8 H1.2 Z M13.8 2.5 H9.5 Q7.5 2.5 7.5 4.5 V13 Q7.5 11.8 9.5 11.8 H13.8 Z"/></svg>
<div class="nav" style="top:277.1px;line-height:14px">Edukasi</div>
<svg class="abs" style="left:158px;top:280.1px" width="10" height="8" viewBox="0 0 10 8"><path d="M1.5 2 L5 5.5 L8.5 2" fill="none" stroke="#8b919c" stroke-width="1.2" stroke-linecap="round" stroke-linejoin="round"/></svg>
<svg class="abs" style="left:13.9px;top:308.9px" width="13.3" height="13.3" viewBox="0 0 15 15" stroke="#a4aab4" stroke-width="1.5" fill="none" stroke-linecap="round" stroke-linejoin="round"><rect x="1.5" y="1.8" width="12" height="11.4" rx="2"/><path d="M1.5 7.5 H13.5 M10.5 4.8 H10.6 M10.5 10.2 H10.6"/></svg>
<div class="nav" style="top:308.7px;line-height:14px">VPS</div>
<svg class="abs" style="left:13.9px;top:340.5px" width="13.3" height="13.3" viewBox="0 0 15 15" stroke="#a4aab4" stroke-width="1.5" fill="none" stroke-linecap="round" stroke-linejoin="round"><path d="M13.5 4.5 H2 M10.5 1.5 L13.5 4.5 L10.5 7.5 M1.5 10.5 H13 M4.5 7.5 L1.5 10.5 L4.5 13.5"/></svg>
<div class="nav" style="top:340.3px;line-height:14px">Instrumen</div>
<svg class="abs" style="left:158px;top:343.3px" width="10" height="8" viewBox="0 0 10 8"><path d="M1.5 5.5 L5 2 L8.5 5.5" fill="none" stroke="#8b919c" stroke-width="1.2" stroke-linecap="round" stroke-linejoin="round"/></svg>
<div class="sub" style="top:372.0px;line-height:14px">Trading Forex</div>
<div class="sub" style="top:403.6px;line-height:14px">Energi</div>
<div class="sub" style="top:435.2px;line-height:14px">Komoditas</div>
<div class="sub" style="top:466.8px;line-height:14px;color:#f1f3f5">Indeks Ekuitas</div>
<div class="sub" style="top:498.4px;line-height:14px">Indeks Tematik</div>
<div class="sub" style="top:530.0px;line-height:14px">Logam Mulia</div>
<div class="sub" style="top:561.6px;line-height:14px">Saham</div>
<div class="abs" style="left:102px;top:499px;width:29px;height:13px;border-radius:3px;background:#77291f;color:#f0bdb4;font-size:8.3px;line-height:13.5px;text-align:center;-webkit-text-stroke:0">BARU</div>
<svg class="abs" style="left:13.9px;top:599.1px" width="13.3" height="13.3" viewBox="0 0 15 15" stroke="#a4aab4" stroke-width="1.5" fill="none" stroke-linecap="round" stroke-linejoin="round"><rect x="1.2" y="1.8" width="12.6" height="9" rx="1.5"/><path d="M1.2 8.5 H13.8 M5.5 13.3 H9.5 M7.5 10.8 V13.3"/></svg>
<div class="nav" style="top:598.9px;line-height:14px">Platfom</div>
<svg class="abs" style="left:158px;top:601.9px" width="10" height="8" viewBox="0 0 10 8"><path d="M1.5 2 L5 5.5 L8.5 2" fill="none" stroke="#8b919c" stroke-width="1.2" stroke-linecap="round" stroke-linejoin="round"/></svg>
<svg class="abs" style="left:12.5px;top:629.3px" width="16.5" height="16.5" viewBox="0 0 16.5 16.5" stroke="#a4aab4" stroke-width="1.3" fill="none" stroke-linecap="round" stroke-linejoin="round"><path d="M1.2 3.2 L3.2 1.2 L7.8 5.8 L5.8 7.8 Z M7 7 L13.6 13.6 A1.3 1.3 0 0 1 12.2 15.2 L5.6 8.6 M10.3 1.3 A3.8 3.8 0 0 0 9.2 6.3 L1.6 13.3 A1.4 1.4 0 0 0 3.5 15.1 L10.8 7.6 A3.8 3.8 0 0 0 15.4 6.2 L12.9 6 L12.3 3.9 Z"/></svg>
<div class="nav" style="top:630.6px;line-height:14px">Alat</div>
<svg class="abs" style="left:158px;top:633.6px" width="10" height="8" viewBox="0 0 10 8"><path d="M1.5 2 L5 5.5 L8.5 2" fill="none" stroke="#8b919c" stroke-width="1.2" stroke-linecap="round" stroke-linejoin="round"/></svg>
<svg class="abs" style="left:12.8px;top:661px" width="16.5" height="16.5" viewBox="0 0 16.5 16.5" stroke="#a4aab4" stroke-width="1.3" fill="none" stroke-linecap="round" stroke-linejoin="round"><circle cx="8.25" cy="8.25" r="7.2"/><circle cx="8.25" cy="8.25" r="3.3"/><path d="M3.2 5.3 L5.4 6.6 M13.3 5.3 L11.1 6.6 M3.2 11.2 L5.4 9.9 M13.3 11.2 L11.1 9.9"/></svg>
<div class="nav" style="top:662.3px;line-height:14px">Bantuan</div>
<svg class="abs" style="left:158px;top:665.3px" width="10" height="8" viewBox="0 0 10 8"><path d="M1.5 2 L5 5.5 L8.5 2" fill="none" stroke="#8b919c" stroke-width="1.2" stroke-linecap="round" stroke-linejoin="round"/></svg>
<svg class="abs" style="left:12.8px;top:692.8px" width="16.5" height="16.5" viewBox="0 0 16.5 16.5" stroke="#a4aab4" stroke-width="1.3" fill="none" stroke-linecap="round" stroke-linejoin="round"><path d="M6.5 1.2 A7.3 7.3 0 1 0 15.3 11.2 A8 8 0 0 1 6.5 1.2 Z"/></svg>
<div class="nav" style="top:694.0px;line-height:14px">Akun Islami</div>
<div class="abs" style="left:0;top:819px;width:1487px;height:1px;background:#383838"></div>
<svg class="abs" style="left:1487px;top:0" width="13" height="820" viewBox="0 0 13 820"><path d="M3 10.5 L6.5 4 L10 10.5 Z" fill="#a5a5a5"/><path d="M3 810.5 L6.5 817 L10 810.5 Z" fill="#a5a5a5"/></svg>
<div class="abs" style="left:1368.5px;top:793.5px;font-size:13.4px;letter-spacing:0.5px;font-weight:bold;line-height:16px;color:#fff;white-space:nowrap;-webkit-text-stroke:0;text-shadow:-1px -1px 0 #000,1px -1px 0 #000,-1px 1px 0 #000,1px 1px 0 #000,0 1.5px 0 #000,0 -1.5px 0 #000,1.5px 0 0 #000,-1.5px 0 0 #000">binary-smart.com</div>
</body></html>
